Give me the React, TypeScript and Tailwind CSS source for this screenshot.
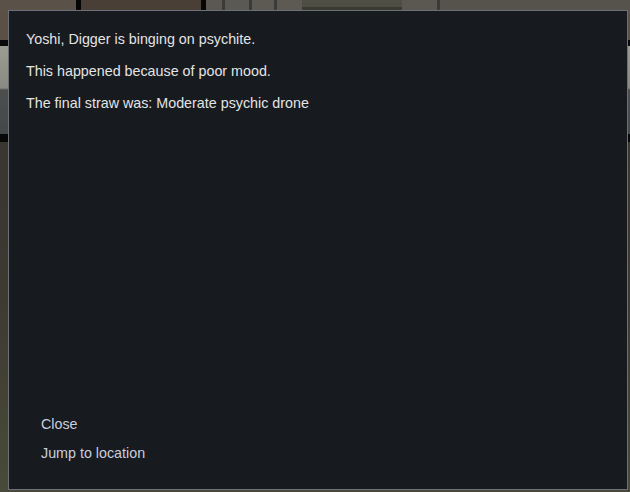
export default function App() {
    const lines = [
        "Yoshi, Digger is binging on psychite.",
        "This happened because of poor mood.",
        "The final straw was: Moderate psychic drone",
    ];

    return (
        <div
            className="w-[630px] h-[492px] flex flex-col overflow-hidden bg-[linear-gradient(to_bottom,#5a5045_0px,#5a5045_40px,#0a0a0a_40px,#0a0a0a_46px,#9c9c92_46px,#8a8a82_88px,#4c4e4e_90px,#44484a_134px,#080808_134px,#080808_142px,#3a3630_142px,#3d3a32_300px,#454536_420px,#4a4a3a_492px)]"
            style={{fontFamily: '"Liberation Sans", Arial, sans-serif'}}
        >
            {/* scene behind the dialog, only the top edge shows */}
            <div className="h-[10px] flex shrink-0">
                <div className="w-[76px] bg-[#5a5148]" />
                <div className="w-[5px] bg-[#050505]" />
                <div className="w-[120px] bg-[#4a3f36]" />
                <div className="w-[5px] bg-[#050505]" />
                <div className="w-[16px] bg-[#5a5850]" />
                <div className="w-[3px] bg-[#3a3a36]" />
                <div className="w-[24px] bg-[#5a5a52]" />
                <div className="w-[3px] bg-[#3a3a36]" />
                <div className="w-[22px] bg-[#5c5a52]" />
                <div className="w-[3px] bg-[#3a3a36]" />
                <div className="w-[25px] bg-[#5c5a52]" />
                <div className="w-[100px] bg-[#4e4e44] border-b-[3px] border-[#3a3a30]" />
                <div className="w-[35px] bg-[#5a5850]" />
                <div className="w-[3px] bg-[#3a3a36]" />
                <div className="flex-1 bg-[#55534b]" />
            </div>

            <div className="ml-[8px] w-[620px] h-[480px] shrink-0 border border-[#6c7078] bg-[#171a1f] flex flex-col">
                <div className="pt-[18px] pl-[17px] flex flex-col gap-[12px] text-[14.3px] leading-[20px] text-[#e4e4e4]">
                    {lines.map((line) => (
                        <p key={line}>{line}</p>
                    ))}
                </div>
                <div className="mt-auto pl-[32px] pb-[26px] flex flex-col gap-[9px] text-[14.3px] leading-[20px] text-[#c9cede]">
                    <button className="text-left w-fit">Close</button>
                    <button className="text-left w-fit">Jump to location</button>
                </div>
            </div>
        </div>
    );
}
